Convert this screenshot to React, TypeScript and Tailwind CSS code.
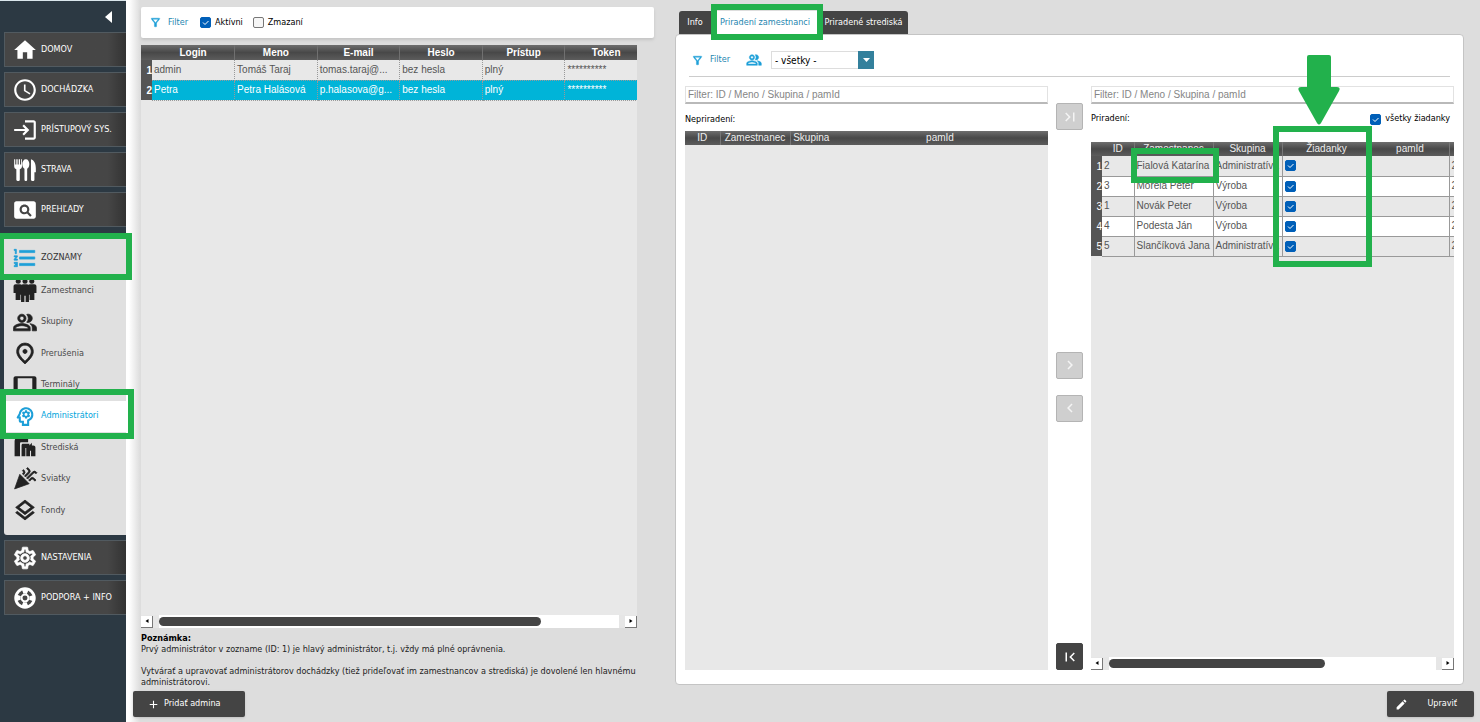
import React from "react";
import {
  MdAdd,
  MdCelebration,
  MdChevronLeft,
  MdChevronRight,
  MdEdit,
  MdFirstPage,
  MdFormatListNumbered,
  MdHome,
  MdLastPage,
  MdLogin,
  MdOutlineFilterAlt,
  MdOutlineLayers,
  MdOutlinePeopleAlt,
  MdOutlinePlace,
  MdOutlinePsychology,
  MdOutlineSettings,
  MdPageview,
  MdSchedule,
  MdTablet,
} from "react-icons/md";
import clsx from "clsx";

type IconType = React.ComponentType<{ size?: number; className?: string }>;

function CutleryIcon({ size = 24, className }: { size?: number; className?: string }) {
  return (
    <svg width={size} height={size} viewBox="0 0 24 24" fill="currentColor" className={className}>
      <path d="M2 2h1v5h1V2h1.200v5h1V2h1.200v5h1V2h.8v6.500c0 1.500-.8 2.300-2 2.700V21c0 .8-.6 1.200-1.400 1.200S4 21.800 4 21V11.200C2.800 10.800 2 10 2 8.500V2z" />
      <path d="M12.800 2c1.900 0 3.200 1.900 3.200 4.500 0 2.100-.8 3.700-2 4.300V21c0 .8-.5 1.200-1.200 1.200s-1.300-.4-1.300-1.200V10.800c-1.200-.6-2-2.200-2-4.300C9.500 3.900 10.900 2 12.800 2z" />
      <path d="M17.500 2c2.800.6 4.500 4 4.500 8.500V14h-1.300v7c0 .8-.6 1.200-1.400 1.200-.9 0-1.800-.4-1.800-1.200V2z" />
    </svg>
  );
}

function CrowdIcon({ size = 24, className }: { size?: number; className?: string }) {
  return (
    <svg width={size} height={size} viewBox="0 0 24 24" fill="currentColor" className={className}>
      <circle cx="5.500" cy="3" r="2.400" />
      <circle cx="12" cy="3" r="2.400" />
      <circle cx="18.500" cy="3" r="2.400" />
      <path d="M3 6h4.500c.5 0 .9.200 1.200.5.400-.3.800-.5 1.300-.5h4c.5 0 .9.200 1.300.5.300-.3.700-.5 1.200-.5H21c1.100 0 2 .9 2 2v6.500h-2V21h-4.600v-5h-.6v7h-3.200v-6h-1.200v6H8.200v-7h-.6v5H3v-6.500H1V8c0-1.100.9-2 2-2z" />
    </svg>
  );
}

function FactoryIcon({ size = 24, className }: { size?: number; className?: string }) {
  return (
    <svg width={size} height={size} viewBox="0 0 24 24" fill="currentColor" className={className}>
      <path d="M2 20.500V6c0-2 1.200-3.500 3.300-3.500H15V7H8.500C7.700 7 7.200 7.500 7.200 8.300v12.200H2z" />
      <path d="M8.700 20.500V10c0-1 .5-1.500 1.500-1.500h6V10l2.400-2.500V10H20c1.200 0 2 .8 2 2v8.500h-4.200V15h-1v5.500h-3.600V12.500h-.8v8H8.700z" />
    </svg>
  );
}

function LifebuoyIcon({ size = 24, className }: { size?: number; className?: string }) {
  return (
    <svg width={size} height={size} viewBox="0 0 24 24" fill="none" stroke="currentColor" className={className}>
      <circle cx="12" cy="12" r="8.600" strokeWidth="2.600" />
      <circle cx="12" cy="12" r="3.200" strokeWidth="1.800" />
      <circle cx="12" cy="12" r="6.200" strokeWidth="4.200" strokeDasharray="4.740 5" strokeDashoffset="2.370" />
    </svg>
  );
}

const NAV_TOP: { label: string; icon: IconType }[] = [
  { label: "DOMOV", icon: MdHome },
  { label: "DOCHÁDZKA", icon: MdSchedule },
  { label: "PRÍSTUPOVÝ SYS.", icon: MdLogin },
  { label: "STRAVA", icon: CutleryIcon },
  { label: "PREHĽADY", icon: MdPageview },
];

const NAV_LISTS: { label: string; icon: IconType; bold?: boolean; active?: boolean }[] = [
  { label: "Zamestnanci", icon: CrowdIcon },
  { label: "Skupiny", icon: MdOutlinePeopleAlt, bold: true },
  { label: "Prerušenia", icon: MdOutlinePlace, bold: true },
  { label: "Terminály", icon: MdTablet },
  { label: "Administrátori", icon: MdOutlinePsychology, active: true },
  { label: "Strediská", icon: FactoryIcon },
  { label: "Sviatky", icon: MdCelebration, bold: true },
  { label: "Fondy", icon: MdOutlineLayers, bold: true },
];

const NAV_BOTTOM: { label: string; icon: IconType; bold?: boolean }[] = [
  { label: "NASTAVENIA", icon: MdOutlineSettings, bold: true },
  { label: "PODPORA + INFO", icon: LifebuoyIcon },
];

const ADMIN_COLUMNS = ["Login", "Meno", "E-mail", "Heslo", "Prístup", "Token"];

const ADMINS = [
  ["admin", "Tomáš Taraj", "tomas.taraj@...", "bez hesla", "plný", "**********"],
  ["Petra", "Petra Halásová", "p.halasova@g...", "bez hesla", "plný", "**********"],
];

const EMPLOYEES = [
  { id: 2, name: "Fialová Katarína", group: "Administratíva" },
  { id: 3, name: "Morela Peter", group: "Výroba" },
  { id: 1, name: "Novák Peter", group: "Výroba" },
  { id: 4, name: "Podesta Ján", group: "Výroba" },
  { id: 5, name: "Slančíková Jana", group: "Administratíva" },
];

const HEAD_BG = "bg-linear-to-b from-[#6e6e6e] via-[#484848] to-[#5c5c5c]";

// material icons carry an empty bounding path, it must stay without a stroke
const BOLD_ICON = "stroke-[0.7] [&_[fill=none]]:stroke-none";

function NavButton({ label, icon: Icon, bold }: { label: string; icon: IconType; bold?: boolean }) {
  return (
    <button className="flex h-[35px] w-full items-center gap-[3px] border-y border-l border-[#515a60] bg-linear-to-r from-[#464646] from-85% to-[#333333] pl-[7px] text-left text-[9px] whitespace-nowrap text-white">
      <Icon size={26} className={clsx("shrink-0", bold && BOLD_ICON)} />
      {label}
    </button>
  );
}

function Check({ label, defaultChecked, hideLabel }: { label: string; defaultChecked?: boolean; hideLabel?: boolean }) {
  return (
    <label className="flex items-center gap-1 text-[9px] text-black">
      <span className="grid size-[11px] shrink-0">
        <input
          type="checkbox"
          defaultChecked={defaultChecked}
          aria-label={hideLabel ? label : undefined}
          className="peer col-start-1 row-start-1 size-[11px] appearance-none rounded-[2px] border border-[#777777] bg-[#f6f6f6] checked:border-[#005fb8] checked:bg-[#005fb8]"
        />
        <svg
          viewBox="0 0 11 11"
          className="pointer-events-none invisible col-start-1 row-start-1 size-[11px] fill-none stroke-white peer-checked:visible"
        >
          <path d="M3 5.500l2 2 3.500-3.500" />
        </svg>
      </span>
      {!hideLabel && label}
    </label>
  );
}

function ScrollBar({ thumb }: { thumb: string }) {
  const arrow =
    "flex size-3 shrink-0 items-center justify-center border-r border-b border-[#777777] bg-white text-black";
  return (
    <div className="flex h-[13px] items-center gap-[6px] bg-[#e6e6e6]">
      <button aria-label="Posunúť doľava" className={arrow}>
        <svg viewBox="0 0 4 4" className="size-1 fill-current">
          <path d="M3.500 0v4L.5 2z" />
        </svg>
      </button>
      <div className="h-[13px] flex-1 bg-white py-[2px]">
        <div className={clsx("h-[9px] rounded-full bg-[#444444]", thumb)} />
      </div>
      <button aria-label="Posunúť doprava" className={arrow}>
        <svg viewBox="0 0 4 4" className="size-1 fill-current">
          <path d="M.5 0v4l3-2z" />
        </svg>
      </button>
    </div>
  );
}

function MoveButton({ label, icon: Icon, disabled }: { label: string; icon: IconType; disabled?: boolean }) {
  return (
    <button
      aria-label={label}
      disabled={disabled}
      className={clsx(
        "flex size-[27px] items-center justify-center rounded-[2px] border",
        disabled ? "border-[#b4b4b4] bg-[#cfcfcf] text-[#f4f4f4]" : "border-[#444444] bg-[#444444] text-white"
      )}
    >
      <Icon size={18} />
    </button>
  );
}

function FilterInput({ label }: { label: string }) {
  return (
    <input
      type="text"
      aria-label={label}
      placeholder="Filter: ID / Meno / Skupina / pamId"
      className="h-[18px] w-full border border-b-2 border-[#e2e2e2] border-b-[#b9b9b9] bg-white px-[2px] font-['Liberation_Sans',sans-serif] text-[10px] text-[#444444] placeholder:text-[#858585]"
    />
  );
}

function Sidebar() {
  return (
    <aside className="w-[126px] shrink-0 bg-[#2c3943] pl-1">
      <div className="flex h-[31px] items-center justify-end pr-[14px]">
        <button aria-label="Zbaliť menu" className="text-white">
          <svg viewBox="0 0 7 12" className="h-3 w-[7px] fill-current">
            <path d="M7 0v12L0 6z" />
          </svg>
        </button>
      </div>
      <nav className="flex flex-col gap-[5px]">
        {NAV_TOP.map((item) => (
          <NavButton key={item.label} {...item} />
        ))}

        <div className="mt-px rounded-bl-[3px] bg-[#e0e0e0] pt-2 pb-[9px]">
          <div className="relative">
            <button className="flex h-[34px] w-full items-center gap-[3px] pl-2 text-[9px] text-[#333333]">
              <MdFormatListNumbered size={26} className={clsx("shrink-0 text-[#1d9fd8]", BOLD_ICON)} />
              ZOZNAMY
            </button>
            <div className="pointer-events-none absolute -top-2 -right-[6px] -bottom-[5px] -left-1 z-10 border-6 border-l-4 border-[#22b14c]" />
          </div>
          <ul className="grid h-[251px] auto-rows-fr">
            {NAV_LISTS.map(({ label, icon: Icon, bold, active }) => (
              <li key={label} className={clsx("relative", active && "bg-white")}>
                <a
                  href="#"
                  className={clsx(
                    "flex h-full items-center gap-[3px] pl-2 text-[9px]",
                    active ? "text-[#00a5dc]" : "text-[#4a4a4a]"
                  )}
                >
                  <Icon
                    size={25}
                    className={clsx("w-[26px] shrink-0", bold && BOLD_ICON, active ? "text-[#1d9fd8]" : "text-[#222222]")}
                  />
                  {label}
                </a>
                {active && (
                  <div className="pointer-events-none absolute -top-3 -right-2 -bottom-[7px] -left-1 z-10 border-6 border-[#22b14c]" />
                )}
              </li>
            ))}
          </ul>
        </div>

        {NAV_BOTTOM.map((item) => (
          <NavButton key={item.label} {...item} />
        ))}
      </nav>
    </aside>
  );
}

function AdminTable() {
  return (
    <div className="min-h-0 flex-1 overflow-hidden bg-[#e8e8e8]">
      <table className="w-[507px] table-fixed border-collapse font-['Liberation_Sans',sans-serif] text-[10px]">
        <colgroup>
          <col className="w-[11px]" />
          {ADMIN_COLUMNS.map((name) => (
            <col key={name} />
          ))}
        </colgroup>
        <thead>
          <tr className={clsx("h-[15px] text-white", HEAD_BG)}>
            <td />
            {ADMIN_COLUMNS.map((name) => (
              <th key={name} className="border-r border-[#707070] p-0 leading-[14px] font-bold">
                {name}
              </th>
            ))}
          </tr>
        </thead>
        <tbody>
          {ADMINS.map((row, i) => (
            <tr key={row[0]} className={clsx("h-5", i === 1 ? "bg-[#00b4d8] text-white" : "text-[#555555]")}>
              <th className="bg-[#555555] p-0 text-right font-bold text-white">{i + 1}</th>
              {row.map((cell, j) => (
                <td
                  key={j}
                  className="border-r border-b border-dotted border-[#999999] py-0 pr-0 pl-[2px] leading-[14px] whitespace-nowrap"
                >
                  {cell}
                </td>
              ))}
            </tr>
          ))}
        </tbody>
      </table>
    </div>
  );
}

function AdminsPanel() {
  return (
    <section className="flex min-w-0 flex-col pt-[7px]">
      <div className="flex h-[31px] items-center rounded-[2px] bg-white pl-2 shadow-[0_2px_3px_#c4c4c4]">
        <MdOutlineFilterAlt size={13} className={clsx("text-[#1d9fd8]", BOLD_ICON)} />
        <span className="ml-[6px] text-[9px] text-[#2586b0]">Filter</span>
        <div className="ml-3 flex gap-[10px]">
          <Check label="Aktívni" defaultChecked />
          <Check label="Zmazaní" />
        </div>
      </div>
      <div className="mt-[7px] mr-[17px] flex flex-1 flex-col">
        <AdminTable />
        <ScrollBar thumb="w-[83%]" />
        <div className="mt-[5px] text-[9px] leading-[11px] text-[#222222]">
          <p className="font-bold text-black">Poznámka:</p>
          <p>Prvý administrátor v zozname (ID: 1) je hlavý administrátor, t.j. vždy má plné oprávnenia.</p>
          <p className="mt-[11px]">
            Vytvárať a upravovať administrátorov dochádzky (tiež prideľovať im zamestnancov a strediská) je dovolené len
            hlavnému administrátorovi.
          </p>
        </div>
      </div>
    </section>
  );
}

function UnassignedTable() {
  return (
    <div className="flex-1 overflow-hidden bg-[#e8e8e8]">
      <table className="w-full table-fixed border-collapse font-['Liberation_Sans',sans-serif] text-[10px]">
        <thead>
          <tr className={clsx("h-[14px] text-[#eeeeee]", HEAD_BG)}>
            <th className="w-[35px] border-r border-[#777777] p-0 leading-[14px] font-normal">ID</th>
            <th className="w-[70px] border-r border-[#777777] p-0 leading-[14px] font-normal">Zamestnanec</th>
            <th className="w-[42px] p-0 leading-[14px] font-normal">Skupina</th>
            <th className="p-0 leading-[14px] font-normal">pamId</th>
          </tr>
        </thead>
      </table>
    </div>
  );
}

function AssignedTable() {
  const head = "border-r border-[#777777] p-0 leading-[14px] font-normal";
  const cell = "overflow-hidden border-r border-b border-[#999999] py-0 pr-0 pl-[2px] leading-[14px] whitespace-nowrap";
  return (
    <div className="relative flex flex-1 flex-col">
      <div className="flex-1 overflow-hidden bg-[#e8e8e8]">
        <table className="w-[438px] table-fixed border-collapse font-['Liberation_Sans',sans-serif] text-[10px]">
          <thead>
            <tr className={clsx("h-[14px] text-[#eeeeee]", HEAD_BG)}>
              <td className="w-[11px]" />
              <th className={clsx(head, "w-8")}>ID</th>
              <th className={clsx(head, "w-[79px]")}>Zamestnanec</th>
              <th className={clsx(head, "w-[69px]")}>Skupina</th>
              <th className={clsx(head, "w-[89px]")}>Žiadanky</th>
              <th className={clsx(head, "w-[78px]")}>pamId</th>
              <th className={head} />
            </tr>
          </thead>
          <tbody>
            {EMPLOYEES.map((e, i) => (
              <tr key={e.id} className={clsx("h-5 text-[#555555]", i % 2 ? "bg-white" : "bg-[#e8e8e8]")}>
                <th className="bg-[#555555] p-0 text-right font-normal text-white">{i + 1}</th>
                <td className={cell}>{e.id}</td>
                <td className={cell}>{e.name}</td>
                <td className={cell}>{e.group}</td>
                <td className={clsx(cell, "pl-1")}>
                  <Check label={`Žiadanky: ${e.name}`} defaultChecked hideLabel />
                </td>
                <td className={cell} />
                <td className={cell}>2</td>
              </tr>
            ))}
          </tbody>
        </table>
      </div>
      <div className="pointer-events-none absolute top-[6px] left-10 h-[35px] w-[88px] border-6 border-[#22b14c]" />
      <div className="pointer-events-none absolute -top-4 left-[182px] h-[141px] w-[99px] border-6 border-[#22b14c]" />
      <svg
        viewBox="0 0 42 70"
        className="pointer-events-none absolute -top-[87px] left-[207px] h-[70px] w-[42px] fill-[#22b14c]"
      >
        <path d="M11 0h20q2 0 2 2v30h6q4 0 2 4L23 68q-2 3-4 0L1 36q-2-4 2-4h6V2q0-2 2-2z" />
      </svg>
    </div>
  );
}

function AssignmentPanel() {
  return (
    <section className="mb-[3px] flex min-w-0 flex-col pt-[11px]">
      <div role="tablist" className="ml-1 flex h-[23px] text-[9px] whitespace-nowrap">
        <button role="tab" className="w-[38px] rounded-t-[3px] bg-[#444444] pr-[6px] text-white">
          Info
        </button>
        <button role="tab" aria-selected="true" className="relative w-[100px] bg-white pr-1 text-[#2586b0]">
          Priradení zamestnanci
          <span className="pointer-events-none absolute -inset-x-[6px] -top-[7px] -bottom-[6px] z-10 border-6 border-[#22b14c]" />
        </button>
        <button role="tab" className="w-[91px] rounded-t-[3px] bg-[#444444] pl-[2px] text-white">
          Priradené strediská
        </button>
      </div>
      <div className="flex flex-1 flex-col rounded-[4px] border border-[#c4c4c4] bg-white px-[9px] pb-[14px]">
        <div className="mx-1 flex h-[42px] items-center border-b border-[#cccccc] pt-[9px] pl-[2px]">
          <MdOutlineFilterAlt size={13} className={clsx("text-[#1d9fd8]", BOLD_ICON)} />
          <span className="ml-[6px] text-[9px] text-[#2586b0]">Filter</span>
          <MdOutlinePeopleAlt size={16} className={clsx("ml-4 text-[#1d9fd8]", BOLD_ICON)} />
          <div className="relative ml-[9px] flex">
            <select
              aria-label="Skupina"
              className="h-[18px] w-[103px] appearance-none border border-[#dddddd] bg-white pl-[3px] text-[10px] text-black"
            >
              <option>- všetky -</option>
            </select>
            <span className="pointer-events-none absolute inset-y-0 right-0 flex w-4 items-center justify-center bg-[#33809c]">
              <svg viewBox="0 0 7 4" className="h-1 w-[7px] fill-white">
                <path d="M0 0h7L3.500 4z" />
              </svg>
            </span>
          </div>
        </div>
        <div className="mt-[9px] grid flex-1 grid-cols-[1fr_27px_1fr] gap-x-2">
          <div className="flex min-w-0 flex-col">
            <FilterInput label="Filter nepriradených" />
            <h2 className="mt-2 mb-[5px] text-[9px] leading-[14px] text-black">Nepriradení:</h2>
            <UnassignedTable />
          </div>
          <div className="flex flex-col items-center justify-between pt-[17px]">
            <MoveButton label="Priradiť všetkých" icon={MdLastPage} disabled />
            <div className="flex flex-col gap-4">
              <MoveButton label="Priradiť" icon={MdChevronRight} disabled />
              <MoveButton label="Odobrať" icon={MdChevronLeft} disabled />
            </div>
            <MoveButton label="Odobrať všetkých" icon={MdFirstPage} />
          </div>
          <div className="flex min-w-0 flex-col">
            <FilterInput label="Filter priradených" />
            <div className="mt-2 mb-4 flex h-[14px] items-center justify-between pr-1">
              <h2 className="text-[9px] text-black">Priradení:</h2>
              <Check label="všetky žiadanky" defaultChecked />
            </div>
            <AssignedTable />
            <ScrollBar thumb="w-[66%]" />
          </div>
        </div>
      </div>
    </section>
  );
}

export default function App() {
  return (
    <div className="flex min-h-screen border-t border-[#dbe7ec] font-['DejaVu_Sans_Condensed','DejaVu_Sans',sans-serif]">
      <Sidebar />
      <main className="-mt-px flex min-w-0 flex-1 flex-col gap-[3px] bg-[linear-gradient(to_right,#ffffff_3px,#dddddd_14px)] pr-[6px] pb-[5px] pl-[7px]">
        <div className="mr-[10px] ml-2 grid flex-1 grid-cols-[513fr_789fr] gap-x-[21px]">
          <AdminsPanel />
          <AssignmentPanel />
        </div>
        <div className="flex justify-between text-[9px] text-white">
          <button className="flex h-[26px] w-28 items-center gap-1 rounded-[2px] bg-[#444444] pl-[14px] shadow-sm">
            <MdAdd size={13} />
            Pridať admina
          </button>
          <button className="flex h-[26px] w-[87px] items-center justify-between rounded-[2px] bg-[#444444] pr-[17px] pl-2 shadow-sm">
            <MdEdit size={13} />
            Upraviť
          </button>
        </div>
      </main>
    </div>
  );
}
